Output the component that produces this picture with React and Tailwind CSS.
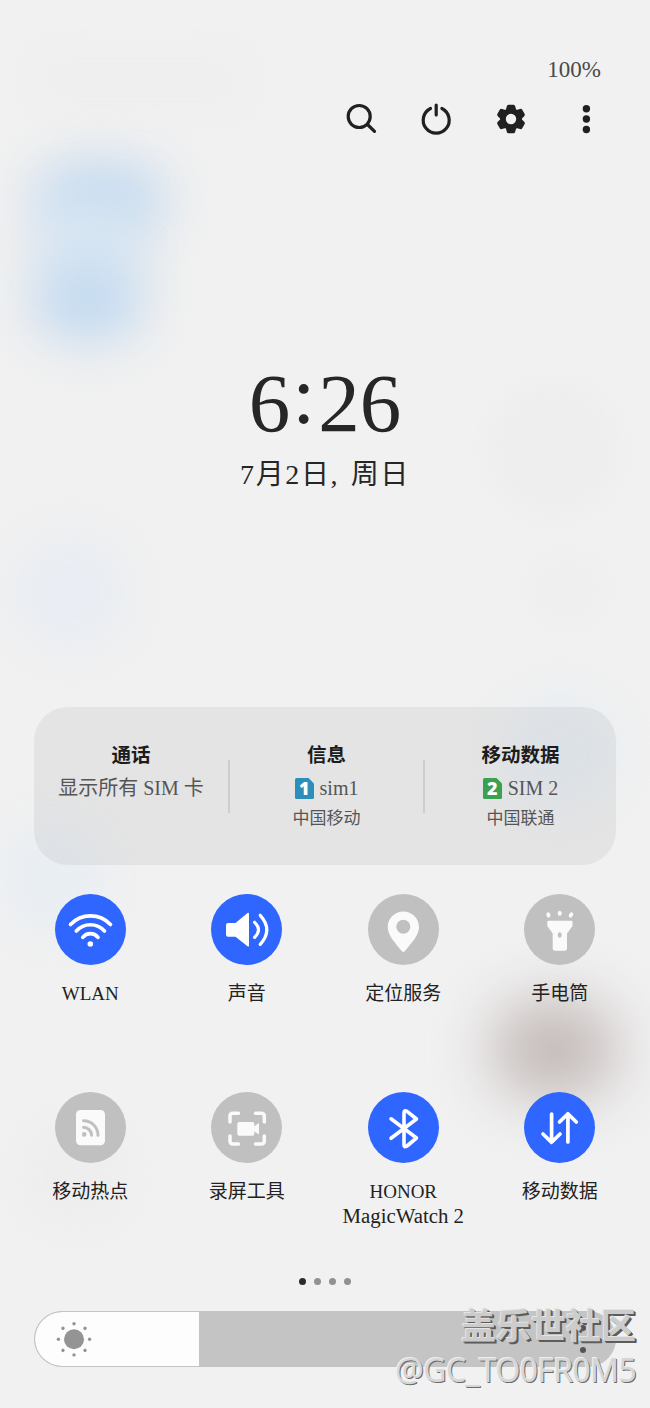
const icons = {
  wifi: (
    <g fill="none" stroke="#fff" strokeWidth="3.7" strokeLinecap="round">
      <path d="M15.5 30.5A27.5 27.5 0 0 1 55.5 30.5" />
      <path d="M21.3 37A19 19 0 0 1 49.5 37" />
      <path d="M27.8 43.3A9.8 9.8 0 0 1 43 43.3" />
      <circle cx="35.3" cy="50" r="2.8" fill="#fff" stroke="none" />
    </g>
  ),
  sound: (
    <g fill="none" stroke="#fff" strokeWidth="3.2" strokeLinecap="round">
      <path
        d="M17 29H24.5L36.5 19Q38 18.2 38 20V51.5Q38 53.3 36.5 52.3L24.5 42.7H17Q15 42.7 15 40.7V31Q15 29 17 29Z"
        fill="#fff"
        stroke="none"
      />
      <path d="M43.6 28.3Q51.4 35.8 43.6 43.3" />
      <path d="M49.2 21.3Q62.4 35.8 49.2 50.3" />
    </g>
  ),
  location: (
    <path
      fill="#fafafa"
      fillRule="evenodd"
      d="M35.3 17.6C44 17.6 51 24.6 51 33C51 41.5 43 49.5 37 57Q35.3 58.8 33.7 57C27.6 49.5 19.7 41.5 19.7 33C19.7 24.6 26.7 17.6 35.3 17.6ZM35.3 25.8A7 7 0 1 0 35.3 39.8A7 7 0 1 0 35.3 25.8Z"
    />
  ),
  torch: (
    <g fill="#fafafa">
      <path
        fillRule="evenodd"
        d="M24.3 26.7H47.5Q48.5 26.7 48.5 28V32L43 39.5V54.5Q43 56.8 40.7 56.8H31Q28.7 56.8 28.7 54.5V39.5L23.3 32V28Q23.3 26.7 24.3 26.7ZM35.7 38.3Q33.7 38.3 33.7 41T35.7 43.8T37.7 41T35.7 38.3Z"
      />
      <ellipse cx="24.4" cy="21" rx="2" ry="2.7" transform="rotate(-20 24.4 21)" />
      <ellipse cx="35.7" cy="19.2" rx="2" ry="2.5" />
      <ellipse cx="47" cy="21" rx="2" ry="2.7" transform="rotate(25 47 21)" />
    </g>
  ),
  hotspot: (
    <g fill="none" stroke="#c0c0c0" strokeWidth="3" strokeLinecap="round">
      <rect x="21" y="18" width="29" height="35.3" rx="4.5" fill="#fafafa" stroke="none" />
      <path d="M28.5 35.3A8 8 0 0 1 36.5 43.2" />
      <path d="M28.5 28.8A14.4 14.4 0 0 1 43 43.2" />
      <circle cx="29.2" cy="42.4" r="2.3" fill="#c0c0c0" stroke="none" />
    </g>
  ),
  recorder: (
    <g fill="none" stroke="#fafafa" strokeWidth="3.5" strokeLinecap="round">
      <path d="M19 30V24Q19 21.2 22 21.2H27.5M44.5 21.2H50Q53.3 21.2 53.3 24V30M53.3 44V49Q53.3 52 50 52H44.5M27.5 52H22Q19 52 19 49V44" />
      <rect x="26.3" y="30" width="17" height="13.7" rx="2" fill="#fafafa" stroke="none" />
      <path d="M42 35.5L47 31.5Q48 31 48 32V41.5Q48 42.5 47 42L42 38.5Z" fill="#fafafa" stroke="none" />
    </g>
  ),
  bluetooth: (
    <path
      d="M23 26.8L48.5 46L39 54Q36 56 36 53V21Q36 17.5 39 19.3L48.5 27L23 46.3"
      fill="none"
      stroke="#fff"
      strokeWidth="3.6"
      strokeLinecap="round"
      strokeLinejoin="round"
    />
  ),
  data: (
    <path
      d="M27.6 22V50M19 42L27.6 50.3L36 42M43.9 50V22M35.5 30L43.9 21.8L52.3 30"
      fill="none"
      stroke="#fff"
      strokeWidth="3.7"
      strokeLinecap="round"
      strokeLinejoin="round"
    />
  ),
};

const tiles = [
  { icon: 'wifi', label: 'WLAN', active: true },
  { icon: 'sound', label: '声音', active: true },
  { icon: 'location', label: '定位服务', active: false },
  { icon: 'torch', label: '手电筒', active: false },
  { icon: 'hotspot', label: '移动热点', active: false },
  { icon: 'recorder', label: '录屏工具', active: false },
  { icon: 'bluetooth', label: 'HONOR', label2: 'MagicWatch 2', active: true },
  { icon: 'data', label: '移动数据', active: true },
];

const Wallpaper = () => (
  <div className="absolute inset-0 overflow-hidden">
    <div className="absolute left-[36px] top-[163px] w-[128px] h-[75px] rounded-full bg-[#c2d9f0] blur-[26px]" />
    <div className="absolute left-[42px] top-[205px] w-[90px] h-[85px] bg-[#d9e7f3] blur-[26px]" />
    <div className="absolute left-[34px] top-[262px] w-[108px] h-[78px] rounded-full bg-[#c2d9f0] blur-[26px]" />
    <div className="absolute left-[10px] top-[535px] w-[120px] h-[115px] rounded-full bg-[#e9edf3] blur-[20px]" />
    <div className="absolute left-[488px] top-[385px] w-[130px] h-[130px] rounded-full bg-[#eeeeee] blur-[8px]" />
    <div className="absolute left-[530px] top-[555px] w-[75px] h-[70px] rounded-full bg-[#efefef] blur-[6px]" />
    <div className="absolute left-[30px] top-[45px] w-[220px] h-[70px] rounded-full bg-[#efefef] blur-[10px]" />
    <div className="absolute left-[500px] top-[695px] w-[120px] h-[115px] rounded-full bg-[#e8eef3] blur-[20px]" />
    <div className="absolute left-[0px] top-[820px] w-[105px] h-[115px] rounded-full bg-[#e9eef3] blur-[20px]" />
    <div className="absolute left-[491px] top-[1000px] w-[126px] h-[98px] rounded-full bg-[#c3bab8] blur-[30px]" />
    <div className="absolute left-[20px] top-[1120px] w-[110px] h-[110px] rounded-full bg-[#eeeeee] blur-[12px]" />
  </div>
);

const SettingsIcon = () => (
  <svg width="32" height="32" viewBox="-16 -16 32 32" fill="currentColor">
    <circle r="8" fill="none" stroke="currentColor" strokeWidth="5.6" />
    {[0, 60, 120, 180, 240, 300].map((deg) => (
      <path
        key={deg}
        d="M-5.4 -8.3L-4.2 -12.8Q-3.8 -14.3 -2.6 -14.3H2.6Q3.8 -14.3 4.2 -12.8L5.4 -8.3Z"
        transform={`rotate(${deg})`}
      />
    ))}
  </svg>
);

const SimIcon = ({ number, color }) => (
  <svg width="19" height="21" viewBox="0 0 19 21" className="overflow-visible">
    <path d="M1.5 0H13.5L19 5.5V19.5Q19 21 17.5 21H1.5Q0 21 0 19.5V1.5Q0 0 1.5 0Z" fill={color} />
    <text
      x="9.3"
      y="17"
      textAnchor="middle"
      fontSize="18"
      fontWeight="800"
      fill="#fff"
      className="font-['Open_Sans',sans-serif]"
    >
      {number}
    </text>
  </svg>
);

const SimColumn = ({ title, value, carrier, children }) => (
  <div className="flex flex-col items-center pt-[37px]">
    <div className="h-6 leading-6 text-[19.5px] font-bold text-[#1c1c1c]">{title}</div>
    <div className="mt-[8px] h-6 flex items-center gap-[6px] text-[20px] leading-6 text-[#555]">
      {children}
      <span className="whitespace-nowrap">{value}</span>
    </div>
    {carrier && <div className="mt-[7px] h-6 leading-6 text-[17px] text-[#555]">{carrier}</div>}
  </div>
);

const Tile = ({ icon, label, label2, active }) => (
  <div className="h-[198px] flex flex-col items-center">
    <div className={`w-[71px] h-[71px] rounded-full ${active ? 'bg-[#2e66ff]' : 'bg-[#c0c0c0]'}`}>
      <svg width="71" height="71" viewBox="0 0 71 71">{icons[icon]}</svg>
    </div>
    <div className="mt-[17px] text-[19px] leading-[24px] text-[#222] text-center whitespace-nowrap">
      <div>{label}</div>
      {label2 && <div className="text-[20.8px]">{label2}</div>}
    </div>
  </div>
);

const App = () => {
  return (
    <div className="relative w-[650px] h-[1408px] overflow-hidden bg-[#f1f1f1] font-['Liberation_Serif','Noto_Sans_CJK_SC',serif] text-[#222]">
      <Wallpaper />

      <div className="relative flex flex-col h-full">
        <div className="pt-[57px] pr-[49px] h-[82px] text-right text-[23px] leading-[26px] text-[#4a4a4a]">100%</div>

        <div className="mt-[21px] pr-[27px] h-8 flex justify-end text-[#202020]">
          <div className="w-[75px] flex justify-center">
            <svg width="32" height="32" fill="none" stroke="currentColor" strokeWidth="3.2" strokeLinecap="round">
              <circle cx="14.2" cy="13.5" r="11" />
              <path d="M22.5 21.5L29.5 28.3" />
            </svg>
          </div>
          <div className="w-[75px] flex justify-center">
            <svg width="32" height="32" fill="none" stroke="currentColor" strokeWidth="3.2" strokeLinecap="round">
              <path d="M10.5 5.5A13 13 0 1 0 21.9 5.5" />
              <path d="M16.2 2V12" />
            </svg>
          </div>
          <div className="w-[75px] flex justify-center">
            <SettingsIcon />
          </div>
          <div className="w-[75px] flex justify-center">
            <svg width="32" height="32" fill="currentColor">
              <circle cx="16.4" cy="5.7" r="3.7" />
              <circle cx="16.4" cy="16" r="3.7" />
              <circle cx="16.4" cy="26.5" r="3.7" />
            </svg>
          </div>
        </div>

        <div className="mt-[223px] h-[90px] text-center text-[83px] leading-[90px] text-[#262626]">
          6<span className="inline-block ml-[2px] mr-[3px] -translate-y-[8px]">:</span>26
        </div>
        <div className="mt-[7px] h-[40px] text-center text-[28px] leading-[40px] tracking-[1.6px] text-[#262626]">
          7月2日, <span className="ml-[3px]">周日</span>
        </div>

        <div className="mt-[212px] mx-[34px] h-[158px] grid grid-cols-[194px_2px_193px_2px_191px] rounded-[34px] bg-black/5">
          <SimColumn title="通话" value="显示所有 SIM 卡" />
          <div className="mt-[53px] h-[53px] bg-[#cdcdcd]" />
          <SimColumn title="信息" value="sim1" carrier="中国移动">
            <SimIcon number="1" color="#2d8fb9" />
          </SimColumn>
          <div className="mt-[53px] h-[53px] bg-[#cdcdcd]" />
          <SimColumn title="移动数据" value="SIM 2" carrier="中国联通">
            <SimIcon number="2" color="#3ba152" />
          </SimColumn>
        </div>

        <div className="mt-[29px] mx-3 h-[384px] grid grid-cols-4">
          {tiles.map((tile) => (
            <Tile key={tile.icon} {...tile} />
          ))}
        </div>

        <div className="flex justify-center gap-2">
          <span className="w-[7px] h-[7px] rounded-full bg-[#2b2b2b]" />
          <span className="w-[7px] h-[7px] rounded-full bg-[#919191]" />
          <span className="w-[7px] h-[7px] rounded-full bg-[#919191]" />
          <span className="w-[7px] h-[7px] rounded-full bg-[#919191]" />
        </div>

        <div className="mt-[26px] mx-[34px] h-[56px] flex rounded-full overflow-hidden border border-[#c4c4c4] bg-[#c4c4c4]">
          <div className="w-[164px] bg-[#fdfdfd] rounded-l-full">
            <svg width="80" height="54" fill="#949494">
              <circle cx="39" cy="27.3" r="10" />
              {[0, 45, 90, 135, 180, 225, 270, 315].map((deg) => (
                <circle key={deg} cx="39" cy="11.7" r="1.7" transform={`rotate(${deg} 39 27.3)`} />
              ))}
            </svg>
          </div>
          <div className="flex-1 flex flex-col items-end justify-center gap-[5px] pr-[29px]">
            <span className="w-[6px] h-[6px] rounded-full bg-[#555]" />
            <span className="w-[6px] h-[6px] rounded-full bg-[#555]" />
            <span className="w-[6px] h-[6px] rounded-full bg-[#555]" />
          </div>
        </div>
      </div>

      {/* community watermark */}
      <div className="absolute right-[14px] top-[1301px] flex flex-col items-end whitespace-nowrap">
        <div className="h-[46px] leading-[46px] text-[35px] font-bold font-['Noto_Sans_CJK_SC',sans-serif] text-[#cccccc] [text-shadow:-1px_-1px_0_#e4e4e4,1px_1px_0_#5c5c5c,2px_2px_0_#5c5c5c]">
          盖乐世社区
        </div>
        <div className="h-[46px] leading-[46px] text-[32px] tracking-[-0.7px] font-['Noto_Sans',sans-serif] text-[#d6d6d6] [text-shadow:-1px_-1px_0_#f0f0f0,1px_1px_0_#6a6a6a]">
          @GC_TO0FR0M5
        </div>
      </div>
    </div>
  );
};

export default App;
